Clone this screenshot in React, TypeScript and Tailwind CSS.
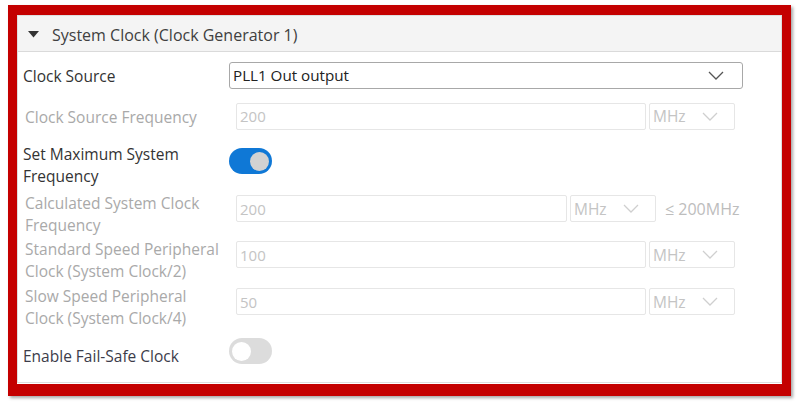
import React from 'react'

const Chevron: React.FC<{ className?: string }> = ({ className }) => (
    <svg width="16" height="9" viewBox="0 0 16 9" className={className}>
        <path d="M1 1 L8 8 L15 1" fill="none" stroke="currentColor" strokeWidth="1.3" />
    </svg>
)

const Toggle: React.FC<{ on: boolean }> = ({ on }) => {
    if (on) {
        return (
            <div className="w-[43px] h-[26px] rounded-full bg-[#0f78d6] flex items-center justify-end pr-[3px]">
                <div className="w-[19px] h-[19px] rounded-full bg-[#d2d2d2]" />
            </div>
        )
    }
    return (
        <div className="w-[43px] h-[26px] rounded-full bg-[#dcdcdc] flex items-center pl-[3px]">
            <div className="w-[19px] h-[19px] rounded-full bg-white" />
        </div>
    )
}

const DisabledInput: React.FC<{ value: string; width: string }> = ({ value, width }) => (
    <div className={`${width} h-[27px] border border-[#e6e6e6] rounded-[2px] flex items-center px-[3px] text-[#c4c4c4] text-[15px]`}>
        {value}
    </div>
)

const UnitSelect: React.FC = () => (
    <div className="w-[86px] h-[27px] ml-[3px] border border-[#e6e6e6] rounded-[2px] flex items-center justify-between pl-[3px] pr-[16px] text-[#c4c4c4] text-[15.5px]">
        <span>MHz</span>
        <Chevron className="text-[#cfcfcf]" />
    </div>
)

const App: React.FC = () => {
    return (
        <div className="w-[800px] h-[406px] bg-white pt-[5px] pl-[8px] font-['Open_Sans',sans-serif] text-[15.5px]">
            <div className="w-[783px] h-[391px] border-l-[9px] border-r-[9px] border-t-[10px] border-b-[12px] border-[#c40000] shadow-[2px_2px_3px_rgba(0,0,0,0.35)] bg-white">
                <div className="h-[368px] border border-[#dedede]">
                    {/* header */}
                    <div className="h-[36px] bg-[#f4f4f4] border-b border-[#dadada] flex items-center">
                        <svg width="11" height="7" viewBox="0 0 11 7" className="ml-[10px] mt-[2px]">
                            <path d="M0 0 L11 0 L5.5 6.5 Z" fill="#333" />
                        </svg>
                        <span className="ml-[13px] text-[16px] text-[#404040] mt-[3px]">System Clock (Clock Generator 1)</span>
                    </div>

                    <div className="pl-[5px] pt-[6px] leading-[22px]">
                        {/* clock source */}
                        <div className="flex items-center h-[34px]">
                            <div className="w-[206px] text-[#333] mt-[1px]">Clock Source</div>
                            <div className="w-[514px] h-[27px] border border-[#a8a8a8] rounded-[3px] flex items-center justify-between pl-[3px] pr-[18px] text-[#222] text-[15.2px]">
                                <span>PLL1 Out output</span>
                                <Chevron className="text-[#555]" />
                            </div>
                        </div>

                        {/* clock source frequency */}
                        <div className="flex items-center h-[48px]">
                            <div className="w-[206px] pl-[2px] text-[#a9a9a9] mt-[2px]">Clock Source Frequency</div>
                            <div className="flex ml-[7px]">
                                <DisabledInput value="200" width="w-[410px]" />
                                <UnitSelect />
                            </div>
                        </div>

                        {/* set max */}
                        <div className="flex items-start h-[51px]">
                            <div className="w-[206px] mt-[3px] text-[#333]">Set Maximum System<br />Frequency</div>
                            <div className="mt-[8px]">
                                <Toggle on={true} />
                            </div>
                        </div>

                        {/* calculated */}
                        <div className="flex items-start h-[46px]">
                            <div className="w-[206px] pl-[2px] mt-[1px] text-[#a9a9a9]">Calculated System Clock<br />Frequency</div>
                            <div className="flex items-center ml-[7px] mt-[4px]">
                                <DisabledInput value="200" width="w-[331px]" />
                                <div className="w-[86px] h-[27px] ml-[3px] border border-[#e6e6e6] rounded-[2px] flex items-center justify-between pl-[3px] pr-[16px] text-[#c4c4c4] text-[15.5px]">
                                    <span>MHz</span>
                                    <Chevron className="text-[#cfcfcf]" />
                                </div>
                                <span className="ml-[9px] text-[#bdbdbd] text-[16px]">≤ 200MHz</span>
                            </div>
                        </div>

                        {/* standard speed */}
                        <div className="flex items-start h-[47px]">
                            <div className="w-[206px] pl-[2px] mt-[1px] text-[#a9a9a9]">Standard Speed Peripheral<br />Clock (System Clock/2)</div>
                            <div className="flex ml-[7px] mt-[4px]">
                                <DisabledInput value="100" width="w-[410px]" />
                                <UnitSelect />
                            </div>
                        </div>

                        {/* slow speed */}
                        <div className="flex items-start h-[46px]">
                            <div className="w-[206px] pl-[2px] mt-[1px] text-[#a9a9a9]">Slow Speed Peripheral<br />Clock (System Clock/4)</div>
                            <div className="flex ml-[7px] mt-[4px]">
                                <DisabledInput value="50" width="w-[410px]" />
                                <UnitSelect />
                            </div>
                        </div>

                        {/* fail safe */}
                        <div className="flex items-start h-[48px]">
                            <div className="w-[206px] mt-[15px] text-[#3c3c4a]">Enable Fail-Safe Clock</div>
                            <div className="mt-[8px]">
                                <Toggle on={false} />
                            </div>
                        </div>
                    </div>
                </div>
            </div>
        </div>
    )
}

export default App
